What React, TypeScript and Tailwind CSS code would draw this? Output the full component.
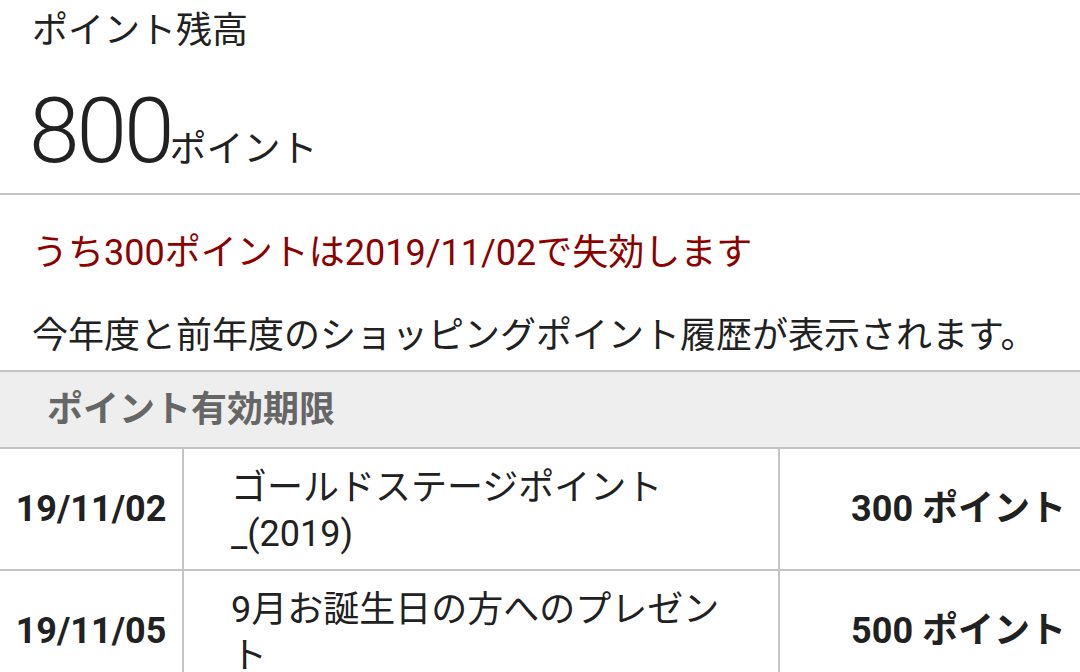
import React from "react";

const font = { fontFamily: '"Roboto", "Noto Sans CJK JP", sans-serif' };

export default function App() {
  const rows = [
    { date: "19/11/02", name: "ゴールドステージポイント_(2019)", pts: "300 ポイント" },
    { date: "19/11/05", name: "9月お誕生日の方へのプレゼント", pts: "500 ポイント" },
  ];
  return (
    <div className="w-[1080px] h-[672px] overflow-hidden bg-white text-[#212121]" style={font}>
      <div className="px-[32px] pt-[6px] h-[195px] border-b-2 border-[#c4c4c4]">
        <div className="text-[36px] leading-[50px]">ポイント残高</div>
        <div className="flex items-baseline mt-[30px] leading-none">
          <span className="text-[91px] font-light tracking-[-3px] ml-[-3px]">800</span>
          <span className="text-[37px] ml-[-2px]">ポイント</span>
        </div>
      </div>
      <div className="px-[32px] pt-[31px]">
        <div className="text-[36px] leading-[54px] text-[#8c0000]">うち300ポイントは2019/11/02で失効します</div>
        <div className="text-[36px] leading-[54px] mt-[29px] h-[61px]">今年度と前年度のショッピングポイント履歴が表示されます。</div>
      </div>
      <div className="h-[79px] bg-[#eeeeee] border-t-2 border-b-2 border-[#c4c4c4] flex items-center pl-[47px]">
        <span className="text-[36px] font-bold text-[#666666]">ポイント有効期限</span>
      </div>
      {rows.map((r) => (
        <div key={r.date} className="flex border-b-2 border-[#c4c4c4] h-[122px]">
          <div className="w-[184px] shrink-0 border-r-2 border-[#c4c4c4] flex items-center justify-center text-[36px] font-bold">
            {r.date}
          </div>
          <div className="w-[596px] shrink-0 border-r-2 border-[#c4c4c4] flex items-center pl-[47px] pr-[48px] pt-[4px] text-[36px] leading-[46px]">
            <span>{r.name}</span>
          </div>
          <div className="flex-1 flex items-center justify-end pr-[14px] text-[36px] font-bold">
            {r.pts}
          </div>
        </div>
      ))}
    </div>
  );
}
